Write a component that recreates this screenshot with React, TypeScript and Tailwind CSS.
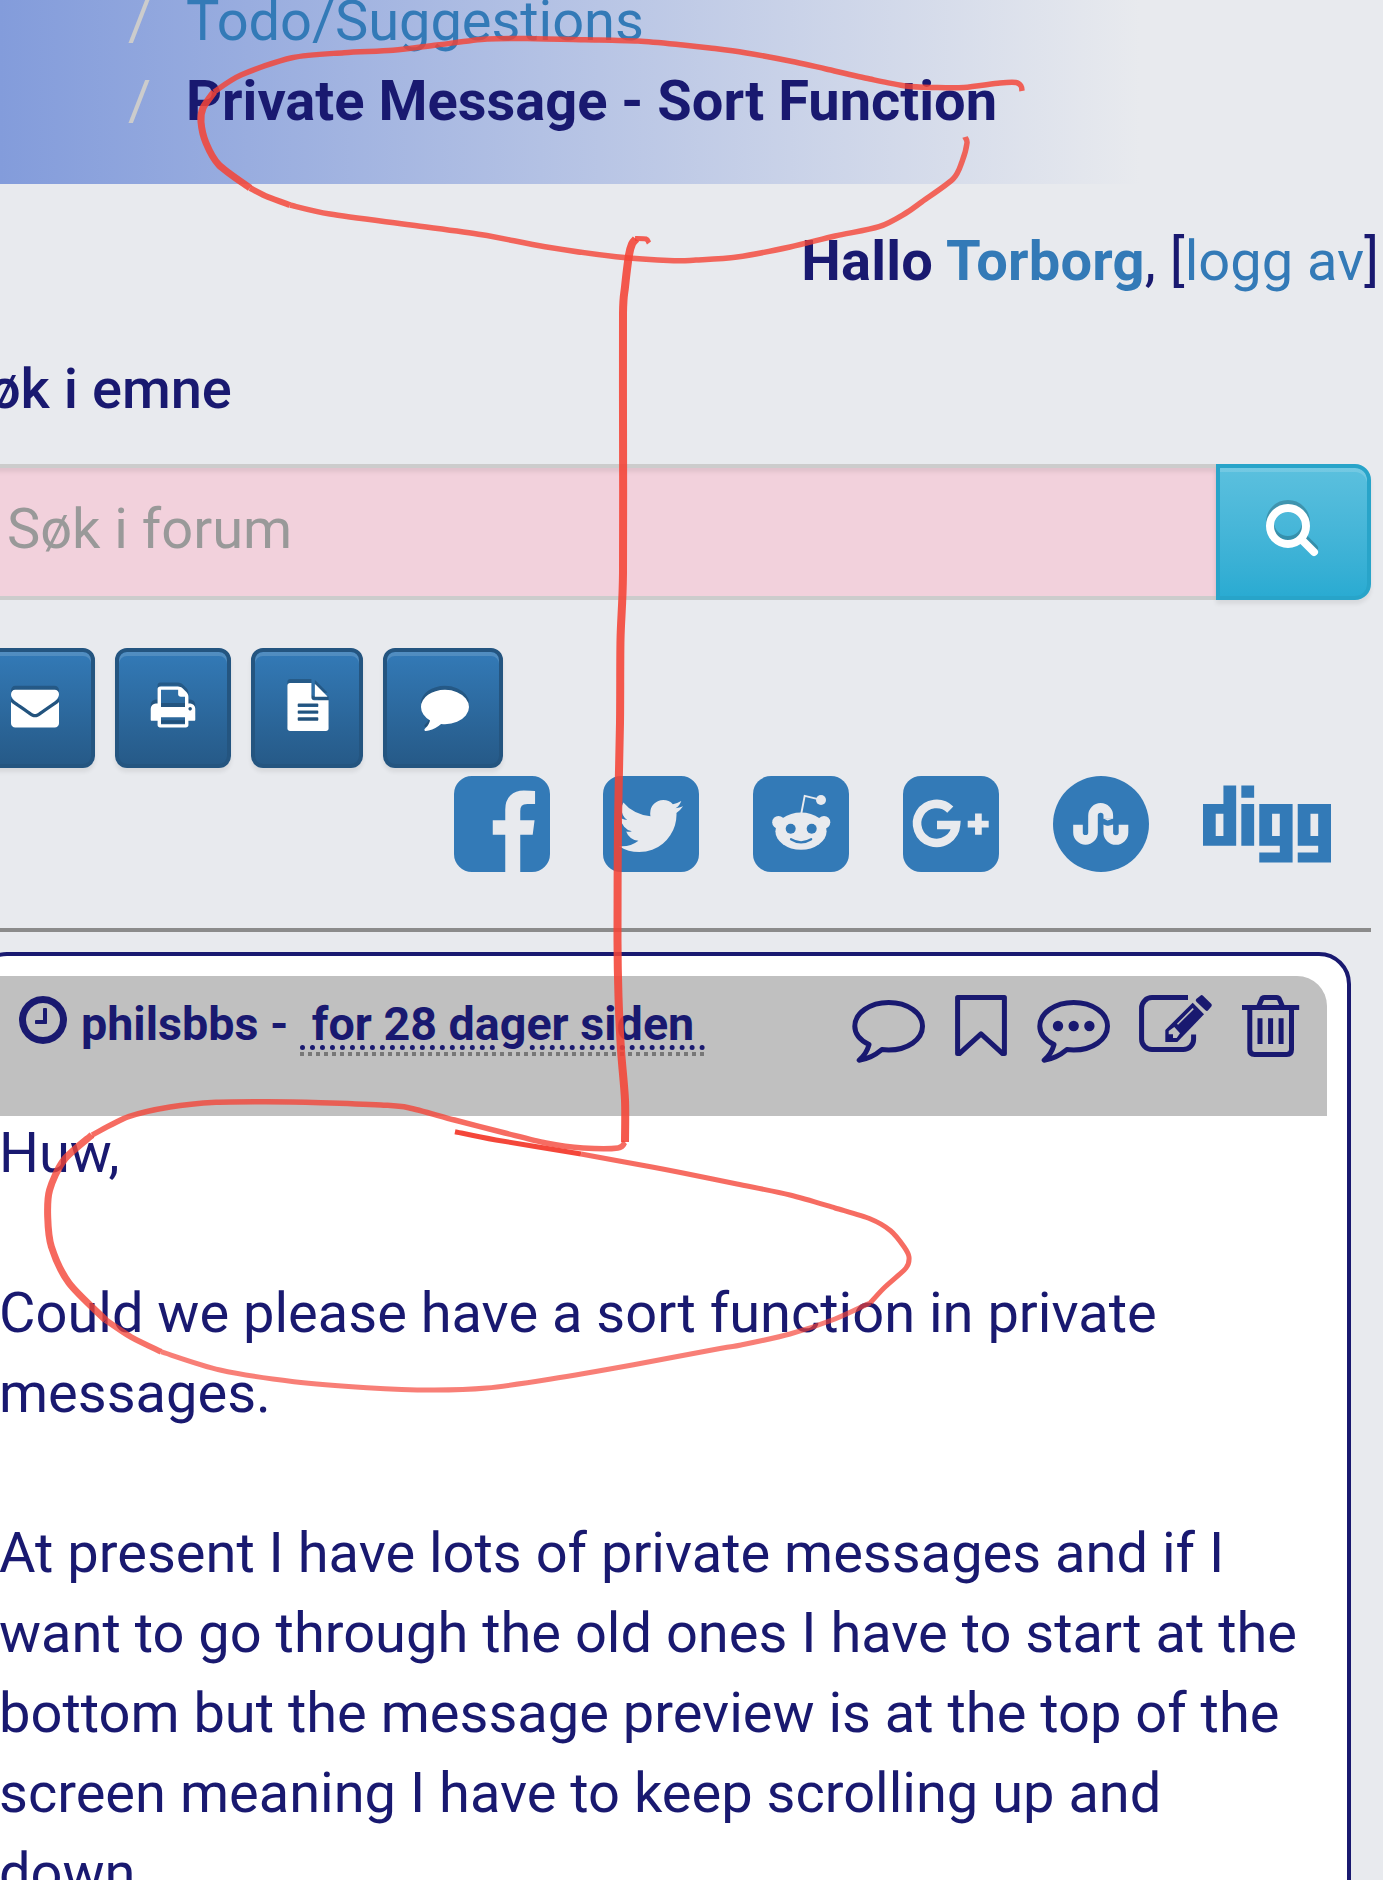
import React from "react";
import { FaDigg } from "react-icons/fa";

type Point = [number, number];
type Stroke = { width: number; opacity: number; points: Point[] };

const ENVELOPE =
  "M1792 710v794q0 66-47 113t-113 47h-1472q-66 0-113-47t-47-113v-794q44 49 101 87 362 246 497 345 57 42 92.5 65.5t94.5 48 110 24.5h2q51 0 110-24.5t94.5-48 92.5-65.5q170-123 498-345 57-39 100-87zm0-294q0 79-49 151t-122 123q-376 261-468 325-10 7-42.5 31t-54 38.5-52 32.5-57.5 27-50 9h-2q-23 0-50-9t-57.5-27-52-32.5-54-38.5-42.5-31q-91-64-262-182.5t-205-142.5q-62-42-117-115.5t-55-136.5q0-78 41.5-130t118.5-52h1472q65 0 112.5 47t47.5 113z";
const PRINTER =
  "M448 1536h896v-256h-896v256zm0-640h896v-384h-160q-40 0-68-28t-28-68v-160h-640v640zm1152 64q0-26-19-45t-45-19-45 19-19 45 19 45 45 19 45-19 19-45zm128 0v416q0 13-9.5 22.5t-22.5 9.5h-224v160q0 40-28 68t-68 28h-960q-40 0-68-28t-28-68v-160h-224q-13 0-22.5-9.5t-9.5-22.5v-416q0-79 56.5-135.5t135.5-56.5h64v-544q0-40 28-68t68-28h672q40 0 88 20t76 48l152 152q28 28 48 76t20 88v256h64q79 0 135.5 56.5t56.5 135.5z";
const FILE_TEXT =
  "M1596 476q14 14 28 36h-472v-472q22 14 36 28zm-476 164h544v1056q0 40-28 68t-68 28h-1344q-40 0-68-28t-28-68v-1600q0-40 28-68t68-28h800v544q0 40 28 68t68 28zm160 736v-64q0-14-9-23t-23-9h-704q-14 0-23 9t-9 23v64q0 14 9 23t23 9h704q14 0 23-9t9-23zm0-256v-64q0-14-9-23t-23-9h-704q-14 0-23 9t-9 23v64q0 14 9 23t23 9h704q14 0 23-9t9-23zm0-256v-64q0-14-9-23t-23-9h-704q-14 0-23 9t-9 23v64q0 14 9 23t23 9h704q14 0 23-9t9-23z";
const COMMENT =
  "M1792 896q0 174-120 321.5t-326 233-450 85.5q-70 0-145-8-198 175-460 242-49 14-114 22-17 2-30.5-9t-17.5-29v-1q-3-4-.5-12t2-10 4.5-9.5l6-9 7-8.5 8-9q7-8 31-34.5t34.5-38 31-39.5 32.5-51 27-59 26-76q-157-89-247.5-220t-90.5-281q0-130 71-248.5t191-204.5 286-136.5 348-50.5q244 0 450 85.5t326 233 120 321.5z";
const CLOCK =
  "M1024 544v448q0 14-9 23t-23 9h-320q-14 0-23-9t-9-23v-64q0-14 9-23t23-9h224v-352q0-14 9-23t23-9h64q14 0 23 9t9 23zm416 352q0-148-73-273t-198-198-273-73-273 73-198 198-73 273 73 273 198 198 273 73 273-73 198-198 73-273zm224 0q0 209-103 385.5t-279.5 279.5-385.5 103-385.5-103-279.5-279.5-103-385.5 103-385.5 279.5-279.5 385.5-103 385.5 103 279.5 279.5 103 385.5z";
const FACEBOOK =
  "M1376 128q119 0 203.5 84.5t84.5 203.5v960q0 119-84.5 203.5t-203.5 84.5h-188v-595h199l30-232h-229v-148q0-56 23.5-84t91.5-28l122-1v-207q-63-9-178-9-136 0-217.5 80t-81.5 226v171h-200v232h200v595h-532q-119 0-203.5-84.5t-84.5-203.5v-960q0-119 84.5-203.5t203.5-84.5h960z";
const TWITTER =
  "M1408 610q-56 25-121 34 68-40 93-117-65 38-134 51-61-66-153-66-87 0-148.5 61.5t-61.5 148.5q0 29 5 48-129-7-242-65t-192-155q-29 50-29 106 0 114 91 175-47-1-100-26v2q0 75 50 133.5t123 72.5q-29 8-51 8-13 0-39-4 21 63 74.5 104t121.5 42q-116 90-261 90-26 0-50-3 148 94 322 94 112 0 210-35.5t168-95 120.5-137 75-162 24.5-168.5q0-18-1-27 63-45 105-109zm256-194v960q0 119-84.5 203.5t-203.5 84.5h-960q-119 0-203.5-84.5t-84.5-203.5v-960q0-119 84.5-203.5t203.5-84.5h960q119 0 203.5 84.5t84.5 203.5z";

function ToolButton({ path, box }: { path: string; box: string }) {
  return (
    <button
      className={`${box} flex h-[120px] shrink-0 items-center justify-center rounded-xl border-4 border-[#245580] bg-linear-to-b from-[#337ab7] to-[#265a88] pb-[3px] shadow-[inset_0_4px_0_rgba(255,255,255,0.15),0_4px_4px_rgba(0,0,0,0.075)]`}
    >
      <svg viewBox="0 0 1792 1792" className="size-12 overflow-visible">
        <path d={path} fill="#000" fillOpacity="0.2" transform="translate(0 -149)" />
        <path d={path} fill="#fff" />
      </svg>
    </button>
  );
}

function SquareGlyph({ path }: { path: string }) {
  return (
    <svg viewBox="128 128 1536 1536" className="size-24 shrink-0" fill="currentColor">
      <path d={path} />
    </svg>
  );
}

function Reddit() {
  return (
    <svg viewBox="0 0 96 96" className="size-24 shrink-0">
      <rect width="96" height="96" rx="18" fill="#337ab7" />
      <g fill="#e8eaee">
        <ellipse cx="48" cy="55.2" rx="25.6" ry="18.6" />
        <circle cx="25.5" cy="46.3" r="6.3" />
        <circle cx="71" cy="46.3" r="6.3" />
        <circle cx="68" cy="24" r="5" />
      </g>
      <path d="M48.2 38L51.7 19.9 67 23.6" fill="none" stroke="#e8eaee" strokeWidth="1.9" />
      <circle cx="37.7" cy="52.7" r="5" fill="#337ab7" />
      <circle cx="58.7" cy="52.7" r="5" fill="#337ab7" />
      <path d="M38 63.2Q48 69.5 58.2 63.2" fill="none" stroke="#337ab7" strokeWidth="2.2" strokeLinecap="round" />
    </svg>
  );
}

function GooglePlus() {
  return (
    <svg viewBox="0 0 96 96" className="size-24 shrink-0">
      <rect width="96" height="96" rx="18" fill="#337ab7" />
      <path d="M47.3 33.6A19.5 19.5 0 1 0 53 49H34" fill="none" stroke="#e8eaee" strokeWidth="8.6" />
      <path d="M64.7 48.2H85.7M75.4 37.4V58.8" stroke="#e8eaee" strokeWidth="6.7" />
    </svg>
  );
}

function StumbleUpon() {
  return (
    <svg viewBox="0 0 96 96" className="size-24 shrink-0">
      <circle cx="48" cy="48" r="48" fill="#337ab7" />
      <g fill="none" stroke="#e8eaee" strokeWidth="9.6">
        <path d="M25 48.7V56.4A7.5 7.5 0 0 0 40 56.4V39.5A7.6 7.6 0 0 1 55.3 39.5V42.7" />
        <path d="M55.3 49.8V56.4A7.6 7.6 0 0 0 70.5 56.4V48.7" />
      </g>
      <path d="M50.5 42.5L54.6 44.6 60.1 42.5Z" fill="#e8eaee" />
      <path d="M50.5 50V48.5L54.6 50.2 60.1 48.5V50Z" fill="#e8eaee" />
    </svg>
  );
}

function Bubble({ dots = false }: { dots?: boolean }) {
  return (
    <svg viewBox="0 0 74 64" className="mt-[4px] h-[64px] w-[74px]">
      <path
        d="M29.8 50.6C32 50.9 34 51 36.7 51C55.5 51 70.5 40.5 70.5 27.3C70.5 14 55.5 3.5 36.7 3.5C18 3.5 2.8 14 2.8 27.3C2.8 35 8.5 41.5 17 45.6C15.5 51.5 12 57 7.2 61.2C15.5 60 22.5 56.8 29.8 50.6Z"
        fill="none"
        stroke="currentColor"
        strokeWidth="5"
        strokeLinejoin="round"
      />
      {dots && (
        <g fill="currentColor">
          <circle cx="21" cy="27" r="5.2" />
          <circle cx="36.7" cy="27" r="5.2" />
          <circle cx="52.4" cy="27" r="5.2" />
        </g>
      )}
    </svg>
  );
}

function Bookmark() {
  return (
    <svg viewBox="0 0 52 62" className="ml-[29px] h-[62px] w-[52px]">
      <path d="M2.6 2.6H49.4V58.6H47.6L26 38.9 4.4 58.6H2.6Z" fill="none" stroke="currentColor" strokeWidth="5" strokeLinejoin="round" />
    </svg>
  );
}

function Edit() {
  return (
    <svg viewBox="0 0 74 58" className="ml-[28px] h-[58px] w-[74px] overflow-visible">
      <path
        d="M49 2.6H13A10.4 10.4 0 0 0 2.6 13V44.2A10.4 10.4 0 0 0 13 54.6H44.2A10.4 10.4 0 0 0 54.6 44.2V39.5"
        fill="none"
        stroke="currentColor"
        strokeWidth="5"
      />
      <path d="M53.7 7.7L65 19.3 38.3 47H26.3V35Z" fill="currentColor" />
      <path d="M58.8 5.2L62.6 2.2 70.8 10.2 67.8 13.8Z" fill="currentColor" stroke="currentColor" strokeWidth="4" strokeLinejoin="round" />
      <path d="M38.5 29.3L54.2 13.6" stroke="#c0c0c0" strokeWidth="1.6" />
      <path d="M29.7 36L35.3 32 41 38.3 37.7 43H34V39.3H29.7Z" fill="#c0c0c0" />
    </svg>
  );
}

function Trash() {
  return (
    <svg viewBox="0 0 58 62" className="ml-[29px] h-[62px] w-[58px]" fill="none" stroke="currentColor" strokeWidth="5">
      <path d="M0 12.6H57.2" />
      <path d="M16.5 12L19.5 4.6Q20.2 2.6 22.5 2.6H34.5Q36.8 2.6 37.6 4.6L40.6 12" />
      <path d="M7.8 14V54.5Q7.8 59.4 12.5 59.4H44.8Q49.5 59.4 49.5 54.5V14" />
      <path d="M18 23.3V49M28.6 23.3V49M39.1 23.3V49" />
    </svg>
  );
}

const strokes: Stroke[] = [
  {
    width: 5.5,
    opacity: 0.82,
    points: [[1022, 91], [1021, 86], [1016, 82.5], [1000, 83], [964, 87.5], [935, 87.5], [906, 86], [870, 79], [826, 69], [795, 62], [745, 52.7], [710, 48], [683, 45], [638, 41], [585, 39.7], [536, 38.7], [487, 39], [437, 45], [393, 50.3], [344, 52.7], [292, 57.7], [241, 75], [214, 92]],
  },
  {
    width: 7,
    opacity: 0.86,
    points: [[214, 92], [203, 108], [201, 122], [206, 143], [219, 165], [250, 188]],
  },
  {
    width: 6,
    opacity: 0.83,
    points: [[250, 188], [268, 197], [290, 205]],
  },
  {
    width: 5.5,
    opacity: 0.8,
    points: [[290, 205], [330, 214], [411, 225], [482, 234.7], [545, 246.7], [616, 256.7], [674, 260.7], [696, 260], [737, 257], [790, 247], [835, 236], [879, 226.7], [906, 213], [922, 201.7], [953, 179], [962, 161.7], [967, 143], [965, 137]],
  },
  { width: 5, opacity: 0.85, points: [[649, 243], [646, 239], [635, 238.5]] },
  {
    width: 8,
    opacity: 0.88,
    points: [[636, 239], [632, 244], [629, 255], [625, 287], [623, 313], [623, 417], [623, 573], [620.5, 640], [620, 723], [618, 823], [617.5, 940], [618.5, 997], [621, 1050], [625, 1100], [625, 1142]],
  },
  {
    width: 5.5,
    opacity: 0.78,
    points: [[625, 1142], [618, 1148], [583, 1148], [546, 1143], [505, 1133], [454.5, 1120], [408.6, 1107.7], [381, 1105], [321, 1102.7], [266, 1101.7], [216, 1102.3], [170, 1107], [128.6, 1116.7], [92, 1135]],
  },
  {
    width: 7,
    opacity: 0.8,
    points: [[92, 1135], [64, 1160], [49.6, 1190], [47.7, 1217], [51.4, 1246.7], [69, 1283], [105.6, 1320]],
  },
  { width: 6, opacity: 0.75, points: [[105.6, 1320], [131, 1337], [161, 1351.7]] },
  {
    width: 5,
    opacity: 0.68,
    points: [[161, 1351.7], [220, 1370], [294, 1381.7], [367, 1387.7], [431.6, 1390], [486.7, 1388], [551, 1379], [633.6, 1364.7], [720, 1348.5], [741, 1345], [790, 1334], [835, 1319], [870.5, 1302.7]],
  },
  {
    width: 5,
    opacity: 0.78,
    points: [[870.5, 1302.7], [884, 1288], [906, 1268], [909, 1257], [904, 1246.7], [890.6, 1230.7], [870.5, 1219], [835, 1208], [790, 1195], [737, 1184], [683, 1173], [652, 1167], [581, 1154]],
  },
  { width: 5, opacity: 0.98, points: [[581, 1154], [496, 1140], [455, 1131.7]] },
];

// Cardinal-spline interpolation through the sampled pen positions.
function smooth(p: Point[]): string {
  let d = `M${p[0][0]} ${p[0][1]}`;
  for (let i = 0; i < p.length - 1; i++) {
    const a = p[Math.max(i - 1, 0)];
    const b = p[i];
    const c = p[i + 1];
    const e = p[Math.min(i + 2, p.length - 1)];
    d += `C${b[0] + (c[0] - a[0]) / 7} ${b[1] + (c[1] - a[1]) / 7} ${c[0] - (e[0] - b[0]) / 7} ${c[1] - (e[1] - b[1]) / 7} ${c[0]} ${c[1]}`;
  }
  return d;
}

function PenMarks() {
  return (
    <svg viewBox="0 0 1383 1880" className="pointer-events-none absolute inset-0 h-[1880px] w-[1383px]" fill="none" stroke="#f44336" strokeLinejoin="round">
      {strokes.map((s, i) => (
        <path key={i} d={smooth(s.points)} strokeWidth={s.width} strokeOpacity={s.opacity} />
      ))}
    </svg>
  );
}

const body = [
  "Huw,",
  "",
  "Could we please have a sort function in private",
  "messages.",
  "",
  "At present I have lots of private messages and if I",
  "want to go through the old ones I have to start at the",
  "bottom but the message preview is at the top of the",
  "screen meaning I have to keep scrolling up and",
  "down.",
];

export default function App() {
  return (
    <div className="relative h-[1880px] w-[1383px] overflow-hidden bg-[#e8eaee] font-['Roboto',sans-serif] text-[56px] leading-[80px] text-[#191970]">
      <nav className="h-[184px] overflow-hidden bg-[linear-gradient(90deg,#839cdb_0px,#e8eaee_1140px)]">
        <ol className="-mt-[19px] pl-[128px]">
          <li className="whitespace-pre">
            <span className="inline-block w-[58px] text-[#ccc]">/</span>
            <a className="tracking-[-0.05px] text-[#337ab7]">Todo/Suggestions</a>
          </li>
          <li className="whitespace-pre font-bold">
            <span className="inline-block w-[58px] font-normal text-[#ccc]">/</span>
            Private Message - Sort Function
          </li>
        </ol>
      </nav>

      <p className="mt-[37px] pr-[4px] text-right whitespace-nowrap">
        <b className="tracking-[0.25px]">Hallo <a className="text-[#337ab7]">Torborg</a></b>, [<a className="text-[#337ab7]">logg av</a>]
      </p>

      <h2 className="mt-12 -ml-[45px] font-medium whitespace-nowrap">Søk i emne</h2>

      <div className="mt-[35px] -ml-[10px] flex h-[136px] w-[1381px]">
        <div className="flex flex-1 items-center border-y-4 border-[#ccc] bg-[#f2d1dc] pb-[7px] pl-[17px] text-[#999] shadow-[inset_0_4px_4px_rgba(0,0,0,0.075)]">
          Søk i forum
        </div>
        <button className="flex w-[155.5px] items-center justify-center rounded-r-2xl border-4 border-[#28a4c9] bg-linear-to-b from-[#5bc0de] to-[#2aabd2] pr-[2px] pb-[2px] shadow-[inset_0_4px_0_rgba(255,255,255,0.15),0_4px_4px_rgba(0,0,0,0.075)]">
          <svg viewBox="0 0 54 54" className="-mt-[5px] size-[54px] overflow-visible" fill="none" strokeWidth="8" strokeLinecap="round">
            <path
              d="M41 24A18 18 0 1 1 5 24 18 18 0 1 1 41 24M37 38L49 50"
              stroke="#000"
              strokeOpacity="0.2"
              transform="translate(0 -4)"
            />
            <g stroke="#fff">
              <circle cx="23" cy="24" r="18" />
              <path d="M36 37L49 50" />
            </g>
          </svg>
        </button>
      </div>

      <div className="mt-12 -ml-[25px] flex gap-5">
        <ToolButton path={ENVELOPE} box="w-[120px]" />
        <ToolButton path={PRINTER} box="w-[116px]" />
        <ToolButton path={FILE_TEXT} box="w-[112px] pl-[2px]" />
        <ToolButton path={COMMENT} box="w-[120px] pl-1" />
      </div>

      <div className="mt-2 ml-[453.5px] flex h-24 items-center gap-[53.9px] text-[#337ab7]">
        <SquareGlyph path={FACEBOOK} />
        <SquareGlyph path={TWITTER} />
        <Reddit />
        <GooglePlus />
        <StumbleUpon />
        <FaDigg className="size-32 shrink-0 scale-y-[0.96]" />
      </div>

      <hr className="mt-14 h-1 w-[1371px] border-0 bg-[#8b8b8b]" />

      <article className="mt-5 -ml-[25px] h-[1000px] w-[1376px] rounded-[32px] border-4 border-[#191970] bg-white pt-5 pr-5 pl-[21px]">
        <header className="flex h-[140px] items-start justify-between rounded-tr-[30px] bg-[#c0c0c0] pr-[27px]">
          <div className="flex pl-[15px]">
            <svg viewBox="0 0 1792 1792" className="mt-4 size-14" fill="currentColor">
              <path d={CLOCK} />
            </svg>
            <div className="mt-2 ml-[10px] text-[46.67px] leading-[80px] font-bold whitespace-pre">
              philsbbs -{" "}
              <abbr className="bg-[repeating-linear-gradient(90deg,#777_0px_4px,transparent_4px_8px)] bg-[length:100%_4px] bg-bottom bg-no-repeat pb-[5px] underline decoration-dotted decoration-[5px] underline-offset-[5px]">
                {"\u00a0for 28 dager siden\u00a0"}
              </abbr>
            </div>
          </div>
          <div className="mt-[19px] flex items-start">
            <Bubble />
            <Bookmark />
            <div className="ml-[30px]">
              <Bubble dots />
            </div>
            <Edit />
            <Trash />
          </div>
        </header>
        <div className="-mt-[3px] -ml-px whitespace-nowrap">
          {body.map((line, i) => (
            <p key={i} className="h-20">
              {line}
            </p>
          ))}
        </div>
      </article>

      <PenMarks />
    </div>
  );
}
